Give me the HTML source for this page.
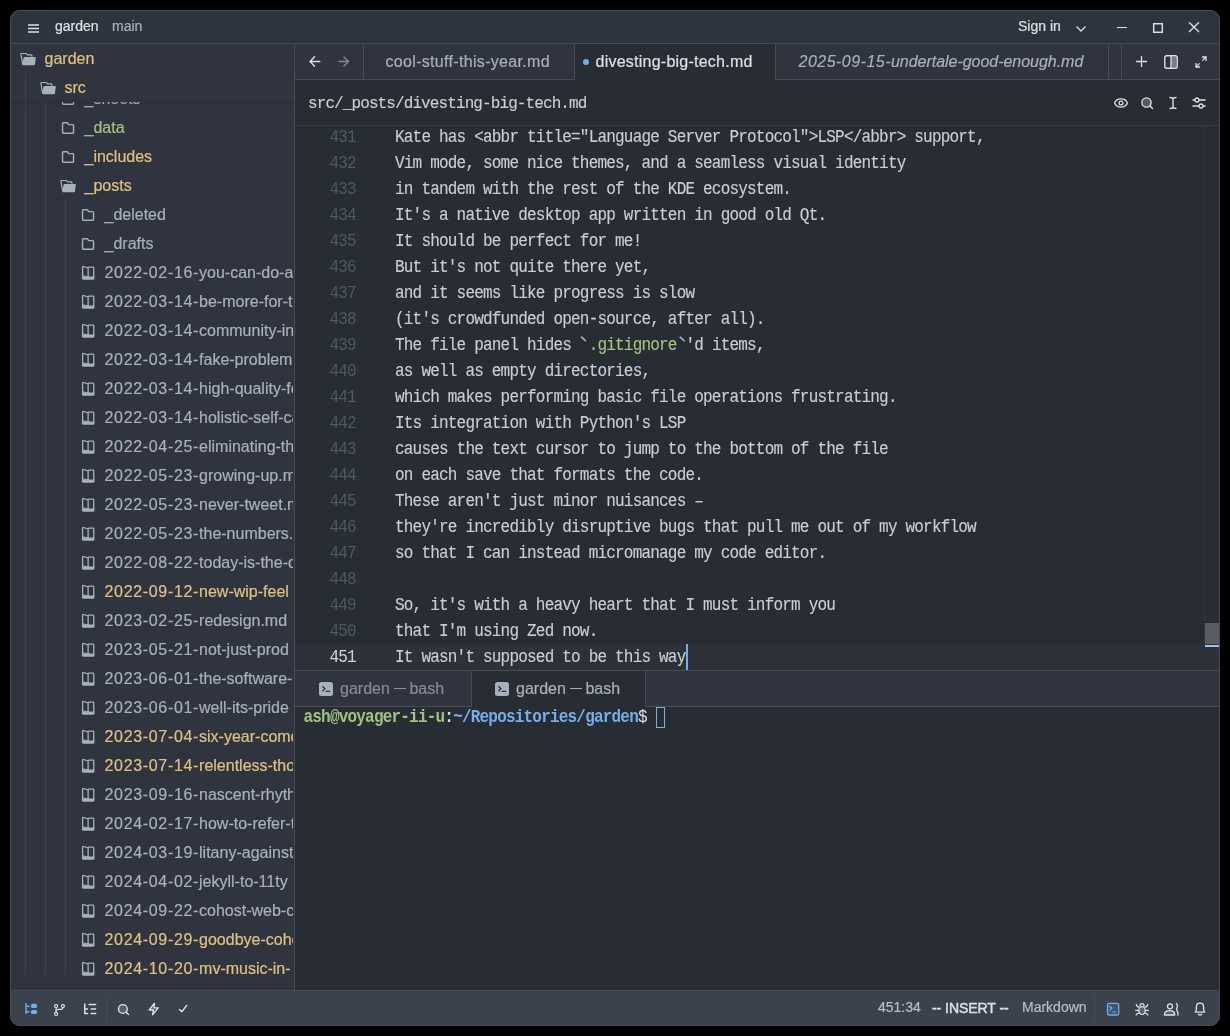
<!DOCTYPE html>
<html><head><meta charset="utf-8"><style>
*{box-sizing:border-box;margin:0;padding:0}
html,body{width:1230px;height:1036px;overflow:hidden;background:#000000}
.win{will-change:transform;position:absolute;left:10px;top:10px;width:1210px;height:1016px;border-radius:10px;overflow:hidden;background:#2f343e}
.in{position:absolute;left:-10px;top:-10px;width:1230px;height:1036px}
.ab{position:absolute}
.sans{font-family:"Liberation Sans",sans-serif;-webkit-text-stroke:0.2px currentColor}
.mono{font-family:"Liberation Mono",monospace;-webkit-text-stroke:0.15px currentColor}
.wb{position:absolute;left:10px;top:10px;width:1210px;height:1016px;border-radius:10px;border:1px solid #464b57;pointer-events:none}
.t{position:absolute;white-space:pre}
.ed{font-size:16px;letter-spacing:-0.8px;transform:scaleY(1.09);transform-origin:0 17px}
svg{position:absolute;overflow:visible}
</style></head>
<body><div class="win"><div class="in">
<div class="ab" style="left:10px;top:10px;width:1210px;height:33px;background:#2e343e;"></div>
<div class="ab" style="left:10px;top:43px;width:1210px;height:1px;background:#464b57;"></div>
<div class="ab" style="left:10px;top:44px;width:284px;height:946px;background:#2f343e;"></div>
<div class="ab" style="left:294px;top:44px;width:1px;height:946px;background:#464b57;"></div>
<div class="ab" style="left:295px;top:44px;width:925px;height:35px;background:#2f343e;"></div>
<div class="ab" style="left:295px;top:79px;width:925px;height:1px;background:#464b57;"></div>
<div class="ab" style="left:295px;top:80px;width:925px;height:45px;background:#282c33;"></div>
<div class="ab" style="left:295px;top:125px;width:925px;height:1px;background:#363c46;"></div>
<div class="ab" style="left:295px;top:126px;width:925px;height:544px;background:#282c33;"></div>
<div class="ab" style="left:295px;top:670px;width:925px;height:1px;background:#464b57;"></div>
<div class="ab" style="left:295px;top:671px;width:925px;height:35px;background:#2f343e;"></div>
<div class="ab" style="left:295px;top:706px;width:925px;height:1px;background:#464b57;"></div>
<div class="ab" style="left:295px;top:707px;width:925px;height:283px;background:#282c33;"></div>
<div class="ab" style="left:10px;top:990px;width:1210px;height:1px;background:#464b57;"></div>
<div class="ab" style="left:10px;top:991px;width:1210px;height:35px;background:#3b414d;"></div>
<svg style="left:27px;top:20px;" width="14" height="14" viewBox="0 0 14 14"><g stroke="#dce0e5" stroke-width="1.3"><line x1="1" y1="5" x2="12" y2="5"/><line x1="1" y1="8.5" x2="12" y2="8.5"/><line x1="1" y1="12" x2="12" y2="12"/></g></svg>
<div class="t sans" style="left:55px;top:16.00px;font-size:14px;line-height:20px;color:#dce0e5;">garden</div>
<div class="t sans" style="left:112px;top:16.00px;font-size:14px;line-height:20px;color:#a9afbc;">main</div>
<div class="t sans" style="left:1018px;top:16.00px;font-size:14px;line-height:20px;color:#dce0e5;">Sign in</div>
<svg style="left:1074px;top:22px;" width="14" height="12" viewBox="0 0 14 12"><polyline points="2.5,4.5 7,9 11.5,4.5" fill="none" stroke="#dce0e5" stroke-width="1.3"/></svg>
<div class="ab" style="left:1117px;top:26.5px;width:10px;height:1.4px;background:#dce0e5;"></div>
<svg style="left:1150px;top:20px;" width="16" height="16" viewBox="0 0 16 16"><rect x="3.7" y="3.7" width="8.6" height="8.6" fill="none" stroke="#dce0e5" stroke-width="1.5"/></svg>
<svg style="left:1186px;top:19px;" width="16" height="16" viewBox="0 0 16 16"><g stroke="#dce0e5" stroke-width="1.3"><line x1="3" y1="3.2" x2="13" y2="13"/><line x1="13" y1="3.2" x2="3" y2="13"/></g></svg>
<svg style="left:307px;top:54px;" width="16" height="16" viewBox="0 0 16 16"><g fill="none" stroke="#dce0e5" stroke-width="1.45" stroke-linecap="round" stroke-linejoin="round"><line x1="3.2" y1="7.5" x2="12.8" y2="7.5"/><polyline points="7.5,2.8 3.2,7.5 7.5,12.2"/></g></svg>
<svg style="left:336px;top:54px;" width="16" height="16" viewBox="0 0 16 16"><g fill="none" stroke="#878a98" stroke-width="1.4" stroke-linecap="round" stroke-linejoin="round"><line x1="3" y1="7.5" x2="12.4" y2="7.5"/><polyline points="8,3 12.4,7.5 8,12"/></g></svg>
<div class="ab" style="left:363px;top:44px;width:1px;height:35px;background:#464b57;"></div>
<div class="t sans" style="left:385.5px;top:51.00px;font-size:16px;line-height:22px;color:#a9afbc;letter-spacing:0.32px">cool-stuff-this-year.md</div>
<div class="ab" style="left:574px;top:44px;width:1px;height:35px;background:#464b57;"></div>
<div class="ab" style="left:575px;top:44px;width:200px;height:36px;background:#282c33;"></div>
<div class="ab" style="left:775px;top:44px;width:1px;height:35px;background:#464b57;"></div>
<div class="ab" style="left:583px;top:58.5px;width:6px;height:6px;border-radius:50%;background:#74ade8"></div>
<div class="t sans" style="left:595.5px;top:51.00px;font-size:16px;line-height:22px;color:#dce0e5;letter-spacing:0.24px">divesting-big-tech.md</div>
<div class="t sans" style="left:798.5px;top:51.00px;font-size:16px;line-height:22px;color:#a9afbc;font-style:italic;letter-spacing:-0.03px"><span style="letter-spacing:0.48px">2025-09-15-</span>undertale-good-enough.md</div>
<div class="ab" style="left:1108px;top:44px;width:1px;height:35px;background:#464b57;"></div>
<div class="ab" style="left:1121px;top:44px;width:1px;height:35px;background:#464b57;"></div>
<svg style="left:1134px;top:54px;" width="16" height="16" viewBox="0 0 16 16"><g stroke="#dce0e5" stroke-width="1.3"><line x1="7.5" y1="2" x2="7.5" y2="13"/><line x1="2" y1="7.5" x2="13" y2="7.5"/></g></svg>
<svg style="left:1163px;top:54px;" width="16" height="16" viewBox="0 0 16 16"><rect x="1.8" y="1.8" width="12.4" height="12.4" rx="2" fill="none" stroke="#dce0e5" stroke-width="1.4"/><rect x="8" y="2.5" width="5.5" height="11" fill="#a9afbc" opacity="0.6"/><line x1="8" y1="2" x2="8" y2="14" stroke="#dce0e5" stroke-width="1.3"/></svg>
<svg style="left:1193px;top:54px;" width="16" height="16" viewBox="0 0 16 16"><g fill="none" stroke="#dce0e5" stroke-width="1.3"><line x1="3" y1="13" x2="6.6" y2="9.4"/><line x1="9.4" y1="6.6" x2="13" y2="3"/><polyline points="9,3 13,3 13,7"/><polyline points="3,9 3,13 7,13"/></g></svg>
<div class="t mono" style="left:308px;top:93.00px;font-size:16px;line-height:22px;color:#c8ccd4;letter-spacing:-0.9px">src/_posts/divesting-big-tech.md</div>
<svg style="left:1113px;top:95px;" width="16" height="16" viewBox="0 0 16 16"><g fill="none" stroke="#dce0e5" stroke-width="1.3"><path d="M1.6 8 C3.6 2.6 12.4 2.6 14.4 8 C12.4 13.4 3.6 13.4 1.6 8Z"/><circle cx="8" cy="8" r="1.9"/></g></svg>
<svg style="left:1139px;top:95px;" width="16" height="16" viewBox="0 0 16 16"><circle cx="7.5" cy="7.5" r="4.6" fill="#555a63" stroke="#dce0e5" stroke-width="1.4"/><line x1="10.8" y1="10.8" x2="13.5" y2="13.5" stroke="#dce0e5" stroke-width="1.4" stroke-linecap="round"/></svg>
<svg style="left:1165px;top:95px;" width="16" height="16" viewBox="0 0 16 16"><g fill="none" stroke="#dce0e5" stroke-width="1.4"><line x1="8" y1="3" x2="8" y2="13"/><path d="M4.5 2.5 Q8 2.5 8 4 Q8 2.5 11.5 2.5"/><path d="M4.5 13.5 Q8 13.5 8 12 Q8 13.5 11.5 13.5"/></g></svg>
<svg style="left:1191px;top:95px;" width="16" height="16" viewBox="0 0 16 16"><g fill="none" stroke="#dce0e5" stroke-width="1.3"><line x1="1.5" y1="5" x2="14.5" y2="5"/><line x1="1.5" y1="11" x2="14.5" y2="11"/></g><circle cx="6" cy="5" r="2" fill="#282c33" stroke="#dce0e5" stroke-width="1.3"/><circle cx="10" cy="11" r="2" fill="#282c33" stroke="#dce0e5" stroke-width="1.3"/></svg>
<div class="ab" style="left:295px;top:644px;width:924px;height:26px;background:#2d313a;"></div>
<div class="t mono ed" style="left:300px;width:55.8px;text-align:right;top:125px;height:26px;line-height:26px;color:#4e5a5f;-webkit-text-stroke:0">431</div>
<div class="t mono ed" style="left:395px;top:125px;height:26px;line-height:26px;color:#c8ccd4">Kate has &lt;abbr title="Language Server Protocol"&gt;LSP&lt;/abbr&gt; support,</div>
<div class="t mono ed" style="left:300px;width:55.8px;text-align:right;top:151px;height:26px;line-height:26px;color:#4e5a5f;-webkit-text-stroke:0">432</div>
<div class="t mono ed" style="left:395px;top:151px;height:26px;line-height:26px;color:#c8ccd4">Vim mode, some nice themes, and a seamless visual identity</div>
<div class="t mono ed" style="left:300px;width:55.8px;text-align:right;top:177px;height:26px;line-height:26px;color:#4e5a5f;-webkit-text-stroke:0">433</div>
<div class="t mono ed" style="left:395px;top:177px;height:26px;line-height:26px;color:#c8ccd4">in tandem with the rest of the KDE ecosystem.</div>
<div class="t mono ed" style="left:300px;width:55.8px;text-align:right;top:203px;height:26px;line-height:26px;color:#4e5a5f;-webkit-text-stroke:0">434</div>
<div class="t mono ed" style="left:395px;top:203px;height:26px;line-height:26px;color:#c8ccd4">It's a native desktop app written in good old Qt.</div>
<div class="t mono ed" style="left:300px;width:55.8px;text-align:right;top:229px;height:26px;line-height:26px;color:#4e5a5f;-webkit-text-stroke:0">435</div>
<div class="t mono ed" style="left:395px;top:229px;height:26px;line-height:26px;color:#c8ccd4">It should be perfect for me!</div>
<div class="t mono ed" style="left:300px;width:55.8px;text-align:right;top:255px;height:26px;line-height:26px;color:#4e5a5f;-webkit-text-stroke:0">436</div>
<div class="t mono ed" style="left:395px;top:255px;height:26px;line-height:26px;color:#c8ccd4">But it's not quite there yet,</div>
<div class="t mono ed" style="left:300px;width:55.8px;text-align:right;top:281px;height:26px;line-height:26px;color:#4e5a5f;-webkit-text-stroke:0">437</div>
<div class="t mono ed" style="left:395px;top:281px;height:26px;line-height:26px;color:#c8ccd4">and it seems like progress is slow</div>
<div class="t mono ed" style="left:300px;width:55.8px;text-align:right;top:307px;height:26px;line-height:26px;color:#4e5a5f;-webkit-text-stroke:0">438</div>
<div class="t mono ed" style="left:395px;top:307px;height:26px;line-height:26px;color:#c8ccd4">(it's crowdfunded open-source, after all).</div>
<div class="t mono ed" style="left:300px;width:55.8px;text-align:right;top:333px;height:26px;line-height:26px;color:#4e5a5f;-webkit-text-stroke:0">439</div>
<div class="t mono ed" style="left:395px;top:333px;height:26px;line-height:26px;color:#c8ccd4">The file panel hides  <span style='color:#a1c181'>.gitignore</span> 'd items,</div>
<div class="t mono ed" style="left:300px;width:55.8px;text-align:right;top:359px;height:26px;line-height:26px;color:#4e5a5f;-webkit-text-stroke:0">440</div>
<div class="t mono ed" style="left:395px;top:359px;height:26px;line-height:26px;color:#c8ccd4">as well as empty directories,</div>
<div class="t mono ed" style="left:300px;width:55.8px;text-align:right;top:385px;height:26px;line-height:26px;color:#4e5a5f;-webkit-text-stroke:0">441</div>
<div class="t mono ed" style="left:395px;top:385px;height:26px;line-height:26px;color:#c8ccd4">which makes performing basic file operations frustrating.</div>
<div class="t mono ed" style="left:300px;width:55.8px;text-align:right;top:411px;height:26px;line-height:26px;color:#4e5a5f;-webkit-text-stroke:0">442</div>
<div class="t mono ed" style="left:395px;top:411px;height:26px;line-height:26px;color:#c8ccd4">Its integration with Python's LSP</div>
<div class="t mono ed" style="left:300px;width:55.8px;text-align:right;top:437px;height:26px;line-height:26px;color:#4e5a5f;-webkit-text-stroke:0">443</div>
<div class="t mono ed" style="left:395px;top:437px;height:26px;line-height:26px;color:#c8ccd4">causes the text cursor to jump to the bottom of the file</div>
<div class="t mono ed" style="left:300px;width:55.8px;text-align:right;top:463px;height:26px;line-height:26px;color:#4e5a5f;-webkit-text-stroke:0">444</div>
<div class="t mono ed" style="left:395px;top:463px;height:26px;line-height:26px;color:#c8ccd4">on each save that formats the code.</div>
<div class="t mono ed" style="left:300px;width:55.8px;text-align:right;top:489px;height:26px;line-height:26px;color:#4e5a5f;-webkit-text-stroke:0">445</div>
<div class="t mono ed" style="left:395px;top:489px;height:26px;line-height:26px;color:#c8ccd4">These aren't just minor nuisances –</div>
<div class="t mono ed" style="left:300px;width:55.8px;text-align:right;top:515px;height:26px;line-height:26px;color:#4e5a5f;-webkit-text-stroke:0">446</div>
<div class="t mono ed" style="left:395px;top:515px;height:26px;line-height:26px;color:#c8ccd4">they're incredibly disruptive bugs that pull me out of my workflow</div>
<div class="t mono ed" style="left:300px;width:55.8px;text-align:right;top:541px;height:26px;line-height:26px;color:#4e5a5f;-webkit-text-stroke:0">447</div>
<div class="t mono ed" style="left:395px;top:541px;height:26px;line-height:26px;color:#c8ccd4">so that I can instead micromanage my code editor.</div>
<div class="t mono ed" style="left:300px;width:55.8px;text-align:right;top:567px;height:26px;line-height:26px;color:#4e5a5f;-webkit-text-stroke:0">448</div>
<div class="t mono ed" style="left:300px;width:55.8px;text-align:right;top:593px;height:26px;line-height:26px;color:#4e5a5f;-webkit-text-stroke:0">449</div>
<div class="t mono ed" style="left:395px;top:593px;height:26px;line-height:26px;color:#c8ccd4">So, it's with a heavy heart that I must inform you</div>
<div class="t mono ed" style="left:300px;width:55.8px;text-align:right;top:619px;height:26px;line-height:26px;color:#4e5a5f;-webkit-text-stroke:0">450</div>
<div class="t mono ed" style="left:395px;top:619px;height:26px;line-height:26px;color:#c8ccd4">that I'm using Zed now.</div>
<div class="t mono ed" style="left:300px;width:55.8px;text-align:right;top:645px;height:26px;line-height:26px;color:#d0d4da;-webkit-text-stroke:0">451</div>
<div class="t mono ed" style="left:395px;top:645px;height:26px;line-height:26px;color:#c8ccd4">It wasn't supposed to be this way</div>
<svg style="left:579px;top:334px;" width="10" height="10" viewBox="0 0 10 10"><line x1="2.6" y1="3.2" x2="6.4" y2="6.6" stroke="#b5b4a6" stroke-width="1.6" stroke-linecap="round"/></svg>
<svg style="left:676px;top:334px;" width="10" height="10" viewBox="0 0 10 10"><line x1="4.2" y1="3.2" x2="8" y2="6.6" stroke="#acb2be" stroke-width="1.6" stroke-linecap="round"/></svg>
<div class="ab" style="left:686px;top:644px;width:2px;height:26px;background:#74ade8;"></div>
<div class="ab" style="left:1204px;top:126px;width:1px;height:518px;background:#2e333c;"></div>
<div class="ab" style="left:1205px;top:623px;width:14px;height:21px;background:#585c63;"></div>
<div class="ab" style="left:1205px;top:645px;width:14px;height:2px;background:#a0c4f0;"></div>
<div class="ab" style="left:471px;top:671px;width:1px;height:35px;background:#464b57;"></div>
<div class="ab" style="left:472px;top:671px;width:173px;height:36px;background:#282c33;"></div>
<div class="ab" style="left:645px;top:671px;width:1px;height:35px;background:#464b57;"></div>
<svg style="left:319px;top:682px;" width="14" height="14" viewBox="0 0 14 14"><rect x="0" y="0" width="14" height="14" rx="2.5" fill="#a9afbc"/><polyline points="3.4,4.3 5.9,6.8 3.4,9.3" fill="none" stroke="#2f343e" stroke-width="1.3"/><line x1="7.2" y1="9.4" x2="10.6" y2="9.4" stroke="#2f343e" stroke-width="1.2" stroke-linecap="round"/></svg>
<div class="t sans" style="left:340px;top:678.00px;font-size:16px;line-height:22px;color:#878a98;">garden<span style="display:inline-block;width:11.8px;height:1.3px;background:currentColor;vertical-align:5px;margin:0 3.6px 0 4.2px"></span>bash</div>
<svg style="left:495px;top:682px;" width="14" height="14" viewBox="0 0 14 14"><rect x="0" y="0" width="14" height="14" rx="2.5" fill="#a9afbc"/><polyline points="3.4,4.3 5.9,6.8 3.4,9.3" fill="none" stroke="#282c33" stroke-width="1.3"/><line x1="7.2" y1="9.4" x2="10.6" y2="9.4" stroke="#282c33" stroke-width="1.2" stroke-linecap="round"/></svg>
<div class="t sans" style="left:516px;top:678.00px;font-size:16px;line-height:22px;color:#a9afbc;">garden<span style="display:inline-block;width:11.8px;height:1.3px;background:currentColor;vertical-align:5px;margin:0 3.6px 0 4.2px"></span>bash</div>
<div class="t mono ed" style="left:303.5px;top:708px;height:20px;line-height:20px;transform-origin:0 14px;-webkit-text-stroke:0"><b style='color:#a1c181'>ash@voyager-ii-u</b><b style='color:#dce0e5'>:</b><b style='color:#74ade8'>~/Repositories/garden</b><span style='color:#dce0e5'>$ </span></div>
<div class="ab" style="left:656px;top:707px;width:9px;height:21px;background:transparent;border:1px solid #74ade8"></div>
<svg style="left:22px;top:1000px;" width="16" height="16" viewBox="0 0 16 16"><g fill="none" stroke="#74ade8" stroke-width="1.4"><line x1="4" y1="3" x2="4" y2="14"/><line x1="4" y1="6.2" x2="7.5" y2="6.2"/><line x1="4" y1="11.8" x2="7.5" y2="11.8"/></g><rect x="9" y="3.8" width="6" height="4.2" rx="1.6" fill="#74ade8"/><rect x="9" y="9.9" width="6" height="4.2" rx="1.6" fill="#74ade8"/></svg>
<svg style="left:51px;top:1000px;" width="16" height="16" viewBox="0 0 16 16"><g fill="none" stroke="#dce0e5" stroke-width="1.15"><circle cx="5.1" cy="6.1" r="1.55"/><circle cx="11.9" cy="6.1" r="1.55"/><circle cx="5.1" cy="13.9" r="1.55"/><line x1="5.1" y1="7.7" x2="5.1" y2="12.3"/><path d="M11.9 7.7 Q11.9 9.4 10 9.4 L7.2 9.4 Q5.1 9.4 5.1 11.2"/></g></svg>
<svg style="left:82px;top:1000px;" width="16" height="16" viewBox="0 0 16 16"><g fill="none" stroke="#dce0e5" stroke-width="1.5"><path d="M2.8 3.6 L2.8 13.6 L6.2 13.6"/><line x1="2.8" y1="9" x2="6" y2="9"/><line x1="6.6" y1="4.6" x2="14.2" y2="4.6"/><line x1="8.6" y1="9" x2="14.2" y2="9"/><line x1="8.6" y1="13.4" x2="14.2" y2="13.4"/></g></svg>
<div class="ab" style="left:106px;top:996px;width:1px;height:25px;background:#464b57;"></div>
<svg style="left:115px;top:1001px;" width="16" height="16" viewBox="0 0 16 16"><circle cx="7.9" cy="8" r="4.4" fill="#5a606b" stroke="#dce0e5" stroke-width="1.4"/><line x1="11.2" y1="11.3" x2="13.5" y2="13.6" stroke="#dce0e5" stroke-width="1.4" stroke-linecap="round"/></svg>
<svg style="left:146px;top:1001px;" width="16" height="16" viewBox="0 0 16 16"><path d="M8.5 2.2 L3.2 9 L7.5 9 L6.5 13.8 L12.3 6.8 L8 6.8 Z" fill="#5a606b" stroke="#dce0e5" stroke-width="1.3" stroke-linejoin="round"/></svg>
<svg style="left:175px;top:1001px;" width="16" height="16" viewBox="0 0 16 16"><polyline points="4.5,8.5 6.8,10.8 11.7,4.5" fill="none" stroke="#dce0e5" stroke-width="1.4" stroke-linecap="round" stroke-linejoin="round"/></svg>
<div class="t sans" style="left:878px;top:997.00px;font-size:14px;line-height:20px;color:#b8bdc7;">451:34</div>
<div class="t sans" style="left:932px;top:998.00px;font-size:14px;line-height:20px;color:#dce0e5;letter-spacing:-0.05px;-webkit-text-stroke:0.45px currentColor">-- INSERT --</div>
<div class="t sans" style="left:1022px;top:997.00px;font-size:14px;line-height:20px;color:#b8bdc7;">Markdown</div>
<div class="ab" style="left:1094px;top:996px;width:1px;height:25px;background:#464b57;"></div>
<svg style="left:1105px;top:1001px;" width="16" height="16" viewBox="0 0 16 16"><rect x="2.5" y="2.4" width="11.2" height="11.6" rx="1.5" fill="#3e5672" stroke="#74ade8" stroke-width="1.3"/><polyline points="4.5,5 6.8,7.3 4.5,9.6" fill="none" stroke="#74ade8" stroke-width="1.2"/><line x1="7.5" y1="11" x2="11" y2="11" stroke="#74ade8" stroke-width="1.2"/></svg>
<svg style="left:1134px;top:1001px;" width="16" height="16" viewBox="0 0 16 16"><g fill="none" stroke="#dce0e5" stroke-width="1.2" stroke-linecap="round"><path d="M5.9 5.2 Q5.9 2.6 8 2.6 Q10.1 2.6 10.1 5.2"/><ellipse cx="8" cy="9.6" rx="3.2" ry="3.9" fill="#5a606b"/><path d="M2.3 3.4 Q2.4 5.6 4.9 6.2"/><path d="M13.7 3.4 Q13.6 5.6 11.1 6.2"/><line x1="1.6" y1="9.3" x2="4.7" y2="9.3"/><line x1="11.3" y1="9.3" x2="14.4" y2="9.3"/><path d="M4.9 12.1 Q2.6 12.5 2.1 14.2"/><path d="M11.1 12.1 Q13.4 12.5 13.9 14.2"/></g></svg>
<svg style="left:1163px;top:1001px;" width="17" height="16" viewBox="0 0 17 16"><g fill="none" stroke="#dce0e5" stroke-width="1.3"><circle cx="7" cy="5.3" r="2.5"/><path d="M1.4 14 Q1.4 9.6 6.6 9.6 Q11.8 9.6 11.8 14 Z" fill="#5a606b" stroke-linejoin="round"/><path d="M13.4 2.4 Q15.2 4.4 13.9 6.9 Q13.1 8.2 14.1 9.8 Q15.4 11.8 14.9 14.2" stroke-linecap="round"/></g></svg>
<svg style="left:1192px;top:1001px;" width="16" height="16" viewBox="0 0 16 16"><g fill="none" stroke="#dce0e5" stroke-width="1.3" stroke-linejoin="round"><path d="M3.2 11.2 Q4.4 10.2 4.4 8.2 L4.4 6 Q4.4 2.2 8 2.2 Q11.6 2.2 11.6 6 L11.6 8.2 Q11.6 10.2 12.8 11.2 Z"/><path d="M6.4 13.2 Q8 14.8 9.6 13.2" stroke-linecap="round"/></g></svg>
<div class="ab" style="left:10px;top:44px;width:283px;height:946px;overflow:hidden"><div class="ab" style="left:15px;top:29px;width:1px;height:901px;background:#3d424c"></div><div class="ab" style="left:35px;top:58px;width:1px;height:872px;background:#3d424c"></div><div class="ab" style="left:55px;top:156px;width:1px;height:774px;background:#3d424c"></div><svg style="left:50px;top:47px" width="16" height="16" viewBox="0 0 16 16"><path d="M2.55 3.6 Q2.55 2.8 3.4 2.8 L7.5 2.8 L8.7 4.6 L12.7 4.6 Q13.55 4.6 13.55 5.5 L13.55 12.3 Q13.55 13.2 12.7 13.2 L3.4 13.2 Q2.55 13.2 2.55 12.3 Z" fill="none" stroke="#a9afbc" stroke-width="1.4" stroke-linejoin="round"/></svg><div class="t sans" style="left:74.5px;top:44.00px;font-size:16px;line-height:22px;color:#a9afbc">_sheets</div><svg style="left:50px;top:76px" width="16" height="16" viewBox="0 0 16 16"><path d="M2.55 3.6 Q2.55 2.8 3.4 2.8 L7.5 2.8 L8.7 4.6 L12.7 4.6 Q13.55 4.6 13.55 5.5 L13.55 12.3 Q13.55 13.2 12.7 13.2 L3.4 13.2 Q2.55 13.2 2.55 12.3 Z" fill="none" stroke="#a9afbc" stroke-width="1.4" stroke-linejoin="round"/></svg><div class="t sans" style="left:74.5px;top:73.00px;font-size:16px;line-height:22px;color:#a7c088">_data</div><svg style="left:50px;top:105px" width="16" height="16" viewBox="0 0 16 16"><path d="M2.55 3.6 Q2.55 2.8 3.4 2.8 L7.5 2.8 L8.7 4.6 L12.7 4.6 Q13.55 4.6 13.55 5.5 L13.55 12.3 Q13.55 13.2 12.7 13.2 L3.4 13.2 Q2.55 13.2 2.55 12.3 Z" fill="none" stroke="#a9afbc" stroke-width="1.4" stroke-linejoin="round"/></svg><div class="t sans" style="left:74.5px;top:102.00px;font-size:16px;line-height:22px;color:#dec184">_includes</div><svg style="left:50px;top:134px" width="16" height="16" viewBox="0 0 16 16"><path d="M2.6 13 L0.9 3.3 Q0.8 2.5 1.7 2.5 L6.4 2.5 L7.4 3.8 L11 3.8 Q11.8 3.8 11.9 4.6 L12 5.8" fill="none" stroke="#a9afbc" stroke-width="1.2" stroke-linejoin="round"/><path d="M4.2 6.1 L15.2 6.1 Q15.9 6.1 15.8 6.8 L15 13.3 Q14.9 14.2 14 14.2 L2.9 14.2 Q2.1 14.2 2.3 13.4 L3.5 6.8 Q3.6 6.1 4.2 6.1 Z" fill="#a9afbc"/></svg><div class="t sans" style="left:74.5px;top:131.00px;font-size:16px;line-height:22px;color:#dec184">_posts</div><svg style="left:70px;top:163px" width="16" height="16" viewBox="0 0 16 16"><path d="M2.55 3.6 Q2.55 2.8 3.4 2.8 L7.5 2.8 L8.7 4.6 L12.7 4.6 Q13.55 4.6 13.55 5.5 L13.55 12.3 Q13.55 13.2 12.7 13.2 L3.4 13.2 Q2.55 13.2 2.55 12.3 Z" fill="none" stroke="#a9afbc" stroke-width="1.4" stroke-linejoin="round"/></svg><div class="t sans" style="left:94.5px;top:160.00px;font-size:16px;line-height:22px;color:#a9afbc">_deleted</div><svg style="left:70px;top:192px" width="16" height="16" viewBox="0 0 16 16"><path d="M2.55 3.6 Q2.55 2.8 3.4 2.8 L7.5 2.8 L8.7 4.6 L12.7 4.6 Q13.55 4.6 13.55 5.5 L13.55 12.3 Q13.55 13.2 12.7 13.2 L3.4 13.2 Q2.55 13.2 2.55 12.3 Z" fill="none" stroke="#a9afbc" stroke-width="1.4" stroke-linejoin="round"/></svg><div class="t sans" style="left:94.5px;top:189.00px;font-size:16px;line-height:22px;color:#a9afbc">_drafts</div><svg style="left:70px;top:221px" width="16" height="16" viewBox="0 0 16 16"><path d="M2.6 13.5 L2.6 2.2 Q2.6 1.3 3.5 1.5 L8.1 2.9 L8.1 12.4" fill="none" stroke="#a9afbc" stroke-width="1.3" stroke-linejoin="round"/><path d="M3.2 10.8 L8.1 12.2" fill="none" stroke="#a9afbc" stroke-width="1.1"/><path d="M8.1 2.9 Q8.2 2.2 9.1 2.2 L13.1 2.2 Q13.75 2.2 13.75 2.9 L13.75 12.5" fill="none" stroke="#a9afbc" stroke-width="1.3" stroke-linejoin="round"/><path d="M1.95 11.6 L14.4 11.6 L14.4 13.4 Q14.4 14.8 13 14.8 L3.5 14.8 Q1.95 14.8 1.95 13.2 Z" fill="#a9afbc"/><rect x="7.5" y="11" width="1.3" height="1.5" fill="#a9afbc"/></svg><div class="t sans" style="left:94.5px;top:218.00px;font-size:16px;line-height:22px;color:#a9afbc"><span style="letter-spacing:0.67px">2022-02-16-</span>you-can-do-anything.md</div><svg style="left:70px;top:250px" width="16" height="16" viewBox="0 0 16 16"><path d="M2.6 13.5 L2.6 2.2 Q2.6 1.3 3.5 1.5 L8.1 2.9 L8.1 12.4" fill="none" stroke="#a9afbc" stroke-width="1.3" stroke-linejoin="round"/><path d="M3.2 10.8 L8.1 12.2" fill="none" stroke="#a9afbc" stroke-width="1.1"/><path d="M8.1 2.9 Q8.2 2.2 9.1 2.2 L13.1 2.2 Q13.75 2.2 13.75 2.9 L13.75 12.5" fill="none" stroke="#a9afbc" stroke-width="1.3" stroke-linejoin="round"/><path d="M1.95 11.6 L14.4 11.6 L14.4 13.4 Q14.4 14.8 13 14.8 L3.5 14.8 Q1.95 14.8 1.95 13.2 Z" fill="#a9afbc"/><rect x="7.5" y="11" width="1.3" height="1.5" fill="#a9afbc"/></svg><div class="t sans" style="left:94.5px;top:247.00px;font-size:16px;line-height:22px;color:#a9afbc"><span style="letter-spacing:0.67px">2022-03-14-</span>be-more-for-the-world.md</div><svg style="left:70px;top:279px" width="16" height="16" viewBox="0 0 16 16"><path d="M2.6 13.5 L2.6 2.2 Q2.6 1.3 3.5 1.5 L8.1 2.9 L8.1 12.4" fill="none" stroke="#a9afbc" stroke-width="1.3" stroke-linejoin="round"/><path d="M3.2 10.8 L8.1 12.2" fill="none" stroke="#a9afbc" stroke-width="1.1"/><path d="M8.1 2.9 Q8.2 2.2 9.1 2.2 L13.1 2.2 Q13.75 2.2 13.75 2.9 L13.75 12.5" fill="none" stroke="#a9afbc" stroke-width="1.3" stroke-linejoin="round"/><path d="M1.95 11.6 L14.4 11.6 L14.4 13.4 Q14.4 14.8 13 14.8 L3.5 14.8 Q1.95 14.8 1.95 13.2 Z" fill="#a9afbc"/><rect x="7.5" y="11" width="1.3" height="1.5" fill="#a9afbc"/></svg><div class="t sans" style="left:94.5px;top:276.00px;font-size:16px;line-height:22px;color:#a9afbc"><span style="letter-spacing:0.67px">2022-03-14-</span>community-in-the-age.md</div><svg style="left:70px;top:308px" width="16" height="16" viewBox="0 0 16 16"><path d="M2.6 13.5 L2.6 2.2 Q2.6 1.3 3.5 1.5 L8.1 2.9 L8.1 12.4" fill="none" stroke="#a9afbc" stroke-width="1.3" stroke-linejoin="round"/><path d="M3.2 10.8 L8.1 12.2" fill="none" stroke="#a9afbc" stroke-width="1.1"/><path d="M8.1 2.9 Q8.2 2.2 9.1 2.2 L13.1 2.2 Q13.75 2.2 13.75 2.9 L13.75 12.5" fill="none" stroke="#a9afbc" stroke-width="1.3" stroke-linejoin="round"/><path d="M1.95 11.6 L14.4 11.6 L14.4 13.4 Q14.4 14.8 13 14.8 L3.5 14.8 Q1.95 14.8 1.95 13.2 Z" fill="#a9afbc"/><rect x="7.5" y="11" width="1.3" height="1.5" fill="#a9afbc"/></svg><div class="t sans" style="left:94.5px;top:305.00px;font-size:16px;line-height:22px;color:#a9afbc"><span style="letter-spacing:0.67px">2022-03-14-</span>fake-problems.md</div><svg style="left:70px;top:337px" width="16" height="16" viewBox="0 0 16 16"><path d="M2.6 13.5 L2.6 2.2 Q2.6 1.3 3.5 1.5 L8.1 2.9 L8.1 12.4" fill="none" stroke="#a9afbc" stroke-width="1.3" stroke-linejoin="round"/><path d="M3.2 10.8 L8.1 12.2" fill="none" stroke="#a9afbc" stroke-width="1.1"/><path d="M8.1 2.9 Q8.2 2.2 9.1 2.2 L13.1 2.2 Q13.75 2.2 13.75 2.9 L13.75 12.5" fill="none" stroke="#a9afbc" stroke-width="1.3" stroke-linejoin="round"/><path d="M1.95 11.6 L14.4 11.6 L14.4 13.4 Q14.4 14.8 13 14.8 L3.5 14.8 Q1.95 14.8 1.95 13.2 Z" fill="#a9afbc"/><rect x="7.5" y="11" width="1.3" height="1.5" fill="#a9afbc"/></svg><div class="t sans" style="left:94.5px;top:334.00px;font-size:16px;line-height:22px;color:#a9afbc"><span style="letter-spacing:0.67px">2022-03-14-</span>high-quality-feedback.md</div><svg style="left:70px;top:366px" width="16" height="16" viewBox="0 0 16 16"><path d="M2.6 13.5 L2.6 2.2 Q2.6 1.3 3.5 1.5 L8.1 2.9 L8.1 12.4" fill="none" stroke="#a9afbc" stroke-width="1.3" stroke-linejoin="round"/><path d="M3.2 10.8 L8.1 12.2" fill="none" stroke="#a9afbc" stroke-width="1.1"/><path d="M8.1 2.9 Q8.2 2.2 9.1 2.2 L13.1 2.2 Q13.75 2.2 13.75 2.9 L13.75 12.5" fill="none" stroke="#a9afbc" stroke-width="1.3" stroke-linejoin="round"/><path d="M1.95 11.6 L14.4 11.6 L14.4 13.4 Q14.4 14.8 13 14.8 L3.5 14.8 Q1.95 14.8 1.95 13.2 Z" fill="#a9afbc"/><rect x="7.5" y="11" width="1.3" height="1.5" fill="#a9afbc"/></svg><div class="t sans" style="left:94.5px;top:363.00px;font-size:16px;line-height:22px;color:#a9afbc"><span style="letter-spacing:0.67px">2022-03-14-</span>holistic-self-care.md</div><svg style="left:70px;top:395px" width="16" height="16" viewBox="0 0 16 16"><path d="M2.6 13.5 L2.6 2.2 Q2.6 1.3 3.5 1.5 L8.1 2.9 L8.1 12.4" fill="none" stroke="#a9afbc" stroke-width="1.3" stroke-linejoin="round"/><path d="M3.2 10.8 L8.1 12.2" fill="none" stroke="#a9afbc" stroke-width="1.1"/><path d="M8.1 2.9 Q8.2 2.2 9.1 2.2 L13.1 2.2 Q13.75 2.2 13.75 2.9 L13.75 12.5" fill="none" stroke="#a9afbc" stroke-width="1.3" stroke-linejoin="round"/><path d="M1.95 11.6 L14.4 11.6 L14.4 13.4 Q14.4 14.8 13 14.8 L3.5 14.8 Q1.95 14.8 1.95 13.2 Z" fill="#a9afbc"/><rect x="7.5" y="11" width="1.3" height="1.5" fill="#a9afbc"/></svg><div class="t sans" style="left:94.5px;top:392.00px;font-size:16px;line-height:22px;color:#a9afbc"><span style="letter-spacing:0.67px">2022-04-25-</span>eliminating-the.md</div><svg style="left:70px;top:424px" width="16" height="16" viewBox="0 0 16 16"><path d="M2.6 13.5 L2.6 2.2 Q2.6 1.3 3.5 1.5 L8.1 2.9 L8.1 12.4" fill="none" stroke="#a9afbc" stroke-width="1.3" stroke-linejoin="round"/><path d="M3.2 10.8 L8.1 12.2" fill="none" stroke="#a9afbc" stroke-width="1.1"/><path d="M8.1 2.9 Q8.2 2.2 9.1 2.2 L13.1 2.2 Q13.75 2.2 13.75 2.9 L13.75 12.5" fill="none" stroke="#a9afbc" stroke-width="1.3" stroke-linejoin="round"/><path d="M1.95 11.6 L14.4 11.6 L14.4 13.4 Q14.4 14.8 13 14.8 L3.5 14.8 Q1.95 14.8 1.95 13.2 Z" fill="#a9afbc"/><rect x="7.5" y="11" width="1.3" height="1.5" fill="#a9afbc"/></svg><div class="t sans" style="left:94.5px;top:421.00px;font-size:16px;line-height:22px;color:#a9afbc"><span style="letter-spacing:0.67px">2022-05-23-</span>growing-up.md</div><svg style="left:70px;top:453px" width="16" height="16" viewBox="0 0 16 16"><path d="M2.6 13.5 L2.6 2.2 Q2.6 1.3 3.5 1.5 L8.1 2.9 L8.1 12.4" fill="none" stroke="#a9afbc" stroke-width="1.3" stroke-linejoin="round"/><path d="M3.2 10.8 L8.1 12.2" fill="none" stroke="#a9afbc" stroke-width="1.1"/><path d="M8.1 2.9 Q8.2 2.2 9.1 2.2 L13.1 2.2 Q13.75 2.2 13.75 2.9 L13.75 12.5" fill="none" stroke="#a9afbc" stroke-width="1.3" stroke-linejoin="round"/><path d="M1.95 11.6 L14.4 11.6 L14.4 13.4 Q14.4 14.8 13 14.8 L3.5 14.8 Q1.95 14.8 1.95 13.2 Z" fill="#a9afbc"/><rect x="7.5" y="11" width="1.3" height="1.5" fill="#a9afbc"/></svg><div class="t sans" style="left:94.5px;top:450.00px;font-size:16px;line-height:22px;color:#a9afbc"><span style="letter-spacing:0.67px">2022-05-23-</span>never-tweet.md</div><svg style="left:70px;top:482px" width="16" height="16" viewBox="0 0 16 16"><path d="M2.6 13.5 L2.6 2.2 Q2.6 1.3 3.5 1.5 L8.1 2.9 L8.1 12.4" fill="none" stroke="#a9afbc" stroke-width="1.3" stroke-linejoin="round"/><path d="M3.2 10.8 L8.1 12.2" fill="none" stroke="#a9afbc" stroke-width="1.1"/><path d="M8.1 2.9 Q8.2 2.2 9.1 2.2 L13.1 2.2 Q13.75 2.2 13.75 2.9 L13.75 12.5" fill="none" stroke="#a9afbc" stroke-width="1.3" stroke-linejoin="round"/><path d="M1.95 11.6 L14.4 11.6 L14.4 13.4 Q14.4 14.8 13 14.8 L3.5 14.8 Q1.95 14.8 1.95 13.2 Z" fill="#a9afbc"/><rect x="7.5" y="11" width="1.3" height="1.5" fill="#a9afbc"/></svg><div class="t sans" style="left:94.5px;top:479.00px;font-size:16px;line-height:22px;color:#a9afbc"><span style="letter-spacing:0.67px">2022-05-23-</span>the-numbers.md</div><svg style="left:70px;top:511px" width="16" height="16" viewBox="0 0 16 16"><path d="M2.6 13.5 L2.6 2.2 Q2.6 1.3 3.5 1.5 L8.1 2.9 L8.1 12.4" fill="none" stroke="#a9afbc" stroke-width="1.3" stroke-linejoin="round"/><path d="M3.2 10.8 L8.1 12.2" fill="none" stroke="#a9afbc" stroke-width="1.1"/><path d="M8.1 2.9 Q8.2 2.2 9.1 2.2 L13.1 2.2 Q13.75 2.2 13.75 2.9 L13.75 12.5" fill="none" stroke="#a9afbc" stroke-width="1.3" stroke-linejoin="round"/><path d="M1.95 11.6 L14.4 11.6 L14.4 13.4 Q14.4 14.8 13 14.8 L3.5 14.8 Q1.95 14.8 1.95 13.2 Z" fill="#a9afbc"/><rect x="7.5" y="11" width="1.3" height="1.5" fill="#a9afbc"/></svg><div class="t sans" style="left:94.5px;top:508.00px;font-size:16px;line-height:22px;color:#a9afbc"><span style="letter-spacing:0.67px">2022-08-22-</span>today-is-the-day.md</div><svg style="left:70px;top:540px" width="16" height="16" viewBox="0 0 16 16"><path d="M2.6 13.5 L2.6 2.2 Q2.6 1.3 3.5 1.5 L8.1 2.9 L8.1 12.4" fill="none" stroke="#a9afbc" stroke-width="1.3" stroke-linejoin="round"/><path d="M3.2 10.8 L8.1 12.2" fill="none" stroke="#a9afbc" stroke-width="1.1"/><path d="M8.1 2.9 Q8.2 2.2 9.1 2.2 L13.1 2.2 Q13.75 2.2 13.75 2.9 L13.75 12.5" fill="none" stroke="#a9afbc" stroke-width="1.3" stroke-linejoin="round"/><path d="M1.95 11.6 L14.4 11.6 L14.4 13.4 Q14.4 14.8 13 14.8 L3.5 14.8 Q1.95 14.8 1.95 13.2 Z" fill="#a9afbc"/><rect x="7.5" y="11" width="1.3" height="1.5" fill="#a9afbc"/></svg><div class="t sans" style="left:94.5px;top:537.00px;font-size:16px;line-height:22px;color:#dec184"><span style="letter-spacing:0.67px">2022-09-12-</span>new-wip-feel</div><svg style="left:70px;top:569px" width="16" height="16" viewBox="0 0 16 16"><path d="M2.6 13.5 L2.6 2.2 Q2.6 1.3 3.5 1.5 L8.1 2.9 L8.1 12.4" fill="none" stroke="#a9afbc" stroke-width="1.3" stroke-linejoin="round"/><path d="M3.2 10.8 L8.1 12.2" fill="none" stroke="#a9afbc" stroke-width="1.1"/><path d="M8.1 2.9 Q8.2 2.2 9.1 2.2 L13.1 2.2 Q13.75 2.2 13.75 2.9 L13.75 12.5" fill="none" stroke="#a9afbc" stroke-width="1.3" stroke-linejoin="round"/><path d="M1.95 11.6 L14.4 11.6 L14.4 13.4 Q14.4 14.8 13 14.8 L3.5 14.8 Q1.95 14.8 1.95 13.2 Z" fill="#a9afbc"/><rect x="7.5" y="11" width="1.3" height="1.5" fill="#a9afbc"/></svg><div class="t sans" style="left:94.5px;top:566.00px;font-size:16px;line-height:22px;color:#a9afbc"><span style="letter-spacing:0.67px">2023-02-25-</span>redesign.md</div><svg style="left:70px;top:598px" width="16" height="16" viewBox="0 0 16 16"><path d="M2.6 13.5 L2.6 2.2 Q2.6 1.3 3.5 1.5 L8.1 2.9 L8.1 12.4" fill="none" stroke="#a9afbc" stroke-width="1.3" stroke-linejoin="round"/><path d="M3.2 10.8 L8.1 12.2" fill="none" stroke="#a9afbc" stroke-width="1.1"/><path d="M8.1 2.9 Q8.2 2.2 9.1 2.2 L13.1 2.2 Q13.75 2.2 13.75 2.9 L13.75 12.5" fill="none" stroke="#a9afbc" stroke-width="1.3" stroke-linejoin="round"/><path d="M1.95 11.6 L14.4 11.6 L14.4 13.4 Q14.4 14.8 13 14.8 L3.5 14.8 Q1.95 14.8 1.95 13.2 Z" fill="#a9afbc"/><rect x="7.5" y="11" width="1.3" height="1.5" fill="#a9afbc"/></svg><div class="t sans" style="left:94.5px;top:595.00px;font-size:16px;line-height:22px;color:#a9afbc"><span style="letter-spacing:0.67px">2023-05-21-</span>not-just-prod</div><svg style="left:70px;top:627px" width="16" height="16" viewBox="0 0 16 16"><path d="M2.6 13.5 L2.6 2.2 Q2.6 1.3 3.5 1.5 L8.1 2.9 L8.1 12.4" fill="none" stroke="#a9afbc" stroke-width="1.3" stroke-linejoin="round"/><path d="M3.2 10.8 L8.1 12.2" fill="none" stroke="#a9afbc" stroke-width="1.1"/><path d="M8.1 2.9 Q8.2 2.2 9.1 2.2 L13.1 2.2 Q13.75 2.2 13.75 2.9 L13.75 12.5" fill="none" stroke="#a9afbc" stroke-width="1.3" stroke-linejoin="round"/><path d="M1.95 11.6 L14.4 11.6 L14.4 13.4 Q14.4 14.8 13 14.8 L3.5 14.8 Q1.95 14.8 1.95 13.2 Z" fill="#a9afbc"/><rect x="7.5" y="11" width="1.3" height="1.5" fill="#a9afbc"/></svg><div class="t sans" style="left:94.5px;top:624.00px;font-size:16px;line-height:22px;color:#a9afbc"><span style="letter-spacing:0.67px">2023-06-01-</span>the-software-of.md</div><svg style="left:70px;top:656px" width="16" height="16" viewBox="0 0 16 16"><path d="M2.6 13.5 L2.6 2.2 Q2.6 1.3 3.5 1.5 L8.1 2.9 L8.1 12.4" fill="none" stroke="#a9afbc" stroke-width="1.3" stroke-linejoin="round"/><path d="M3.2 10.8 L8.1 12.2" fill="none" stroke="#a9afbc" stroke-width="1.1"/><path d="M8.1 2.9 Q8.2 2.2 9.1 2.2 L13.1 2.2 Q13.75 2.2 13.75 2.9 L13.75 12.5" fill="none" stroke="#a9afbc" stroke-width="1.3" stroke-linejoin="round"/><path d="M1.95 11.6 L14.4 11.6 L14.4 13.4 Q14.4 14.8 13 14.8 L3.5 14.8 Q1.95 14.8 1.95 13.2 Z" fill="#a9afbc"/><rect x="7.5" y="11" width="1.3" height="1.5" fill="#a9afbc"/></svg><div class="t sans" style="left:94.5px;top:653.00px;font-size:16px;line-height:22px;color:#a9afbc"><span style="letter-spacing:0.67px">2023-06-01-</span>well-its-pride</div><svg style="left:70px;top:685px" width="16" height="16" viewBox="0 0 16 16"><path d="M2.6 13.5 L2.6 2.2 Q2.6 1.3 3.5 1.5 L8.1 2.9 L8.1 12.4" fill="none" stroke="#a9afbc" stroke-width="1.3" stroke-linejoin="round"/><path d="M3.2 10.8 L8.1 12.2" fill="none" stroke="#a9afbc" stroke-width="1.1"/><path d="M8.1 2.9 Q8.2 2.2 9.1 2.2 L13.1 2.2 Q13.75 2.2 13.75 2.9 L13.75 12.5" fill="none" stroke="#a9afbc" stroke-width="1.3" stroke-linejoin="round"/><path d="M1.95 11.6 L14.4 11.6 L14.4 13.4 Q14.4 14.8 13 14.8 L3.5 14.8 Q1.95 14.8 1.95 13.2 Z" fill="#a9afbc"/><rect x="7.5" y="11" width="1.3" height="1.5" fill="#a9afbc"/></svg><div class="t sans" style="left:94.5px;top:682.00px;font-size:16px;line-height:22px;color:#dec184"><span style="letter-spacing:0.67px">2023-07-04-</span>six-year-comeback.md</div><svg style="left:70px;top:714px" width="16" height="16" viewBox="0 0 16 16"><path d="M2.6 13.5 L2.6 2.2 Q2.6 1.3 3.5 1.5 L8.1 2.9 L8.1 12.4" fill="none" stroke="#a9afbc" stroke-width="1.3" stroke-linejoin="round"/><path d="M3.2 10.8 L8.1 12.2" fill="none" stroke="#a9afbc" stroke-width="1.1"/><path d="M8.1 2.9 Q8.2 2.2 9.1 2.2 L13.1 2.2 Q13.75 2.2 13.75 2.9 L13.75 12.5" fill="none" stroke="#a9afbc" stroke-width="1.3" stroke-linejoin="round"/><path d="M1.95 11.6 L14.4 11.6 L14.4 13.4 Q14.4 14.8 13 14.8 L3.5 14.8 Q1.95 14.8 1.95 13.2 Z" fill="#a9afbc"/><rect x="7.5" y="11" width="1.3" height="1.5" fill="#a9afbc"/></svg><div class="t sans" style="left:94.5px;top:711.00px;font-size:16px;line-height:22px;color:#dec184"><span style="letter-spacing:0.67px">2023-07-14-</span>relentless-thoughts.md</div><svg style="left:70px;top:743px" width="16" height="16" viewBox="0 0 16 16"><path d="M2.6 13.5 L2.6 2.2 Q2.6 1.3 3.5 1.5 L8.1 2.9 L8.1 12.4" fill="none" stroke="#a9afbc" stroke-width="1.3" stroke-linejoin="round"/><path d="M3.2 10.8 L8.1 12.2" fill="none" stroke="#a9afbc" stroke-width="1.1"/><path d="M8.1 2.9 Q8.2 2.2 9.1 2.2 L13.1 2.2 Q13.75 2.2 13.75 2.9 L13.75 12.5" fill="none" stroke="#a9afbc" stroke-width="1.3" stroke-linejoin="round"/><path d="M1.95 11.6 L14.4 11.6 L14.4 13.4 Q14.4 14.8 13 14.8 L3.5 14.8 Q1.95 14.8 1.95 13.2 Z" fill="#a9afbc"/><rect x="7.5" y="11" width="1.3" height="1.5" fill="#a9afbc"/></svg><div class="t sans" style="left:94.5px;top:740.00px;font-size:16px;line-height:22px;color:#a9afbc"><span style="letter-spacing:0.67px">2023-09-16-</span>nascent-rhythm.md</div><svg style="left:70px;top:772px" width="16" height="16" viewBox="0 0 16 16"><path d="M2.6 13.5 L2.6 2.2 Q2.6 1.3 3.5 1.5 L8.1 2.9 L8.1 12.4" fill="none" stroke="#a9afbc" stroke-width="1.3" stroke-linejoin="round"/><path d="M3.2 10.8 L8.1 12.2" fill="none" stroke="#a9afbc" stroke-width="1.1"/><path d="M8.1 2.9 Q8.2 2.2 9.1 2.2 L13.1 2.2 Q13.75 2.2 13.75 2.9 L13.75 12.5" fill="none" stroke="#a9afbc" stroke-width="1.3" stroke-linejoin="round"/><path d="M1.95 11.6 L14.4 11.6 L14.4 13.4 Q14.4 14.8 13 14.8 L3.5 14.8 Q1.95 14.8 1.95 13.2 Z" fill="#a9afbc"/><rect x="7.5" y="11" width="1.3" height="1.5" fill="#a9afbc"/></svg><div class="t sans" style="left:94.5px;top:769.00px;font-size:16px;line-height:22px;color:#a9afbc"><span style="letter-spacing:0.67px">2024-02-17-</span>how-to-refer-to.md</div><svg style="left:70px;top:801px" width="16" height="16" viewBox="0 0 16 16"><path d="M2.6 13.5 L2.6 2.2 Q2.6 1.3 3.5 1.5 L8.1 2.9 L8.1 12.4" fill="none" stroke="#a9afbc" stroke-width="1.3" stroke-linejoin="round"/><path d="M3.2 10.8 L8.1 12.2" fill="none" stroke="#a9afbc" stroke-width="1.1"/><path d="M8.1 2.9 Q8.2 2.2 9.1 2.2 L13.1 2.2 Q13.75 2.2 13.75 2.9 L13.75 12.5" fill="none" stroke="#a9afbc" stroke-width="1.3" stroke-linejoin="round"/><path d="M1.95 11.6 L14.4 11.6 L14.4 13.4 Q14.4 14.8 13 14.8 L3.5 14.8 Q1.95 14.8 1.95 13.2 Z" fill="#a9afbc"/><rect x="7.5" y="11" width="1.3" height="1.5" fill="#a9afbc"/></svg><div class="t sans" style="left:94.5px;top:798.00px;font-size:16px;line-height:22px;color:#a9afbc"><span style="letter-spacing:0.67px">2024-03-19-</span>litany-against-fear.md</div><svg style="left:70px;top:830px" width="16" height="16" viewBox="0 0 16 16"><path d="M2.6 13.5 L2.6 2.2 Q2.6 1.3 3.5 1.5 L8.1 2.9 L8.1 12.4" fill="none" stroke="#a9afbc" stroke-width="1.3" stroke-linejoin="round"/><path d="M3.2 10.8 L8.1 12.2" fill="none" stroke="#a9afbc" stroke-width="1.1"/><path d="M8.1 2.9 Q8.2 2.2 9.1 2.2 L13.1 2.2 Q13.75 2.2 13.75 2.9 L13.75 12.5" fill="none" stroke="#a9afbc" stroke-width="1.3" stroke-linejoin="round"/><path d="M1.95 11.6 L14.4 11.6 L14.4 13.4 Q14.4 14.8 13 14.8 L3.5 14.8 Q1.95 14.8 1.95 13.2 Z" fill="#a9afbc"/><rect x="7.5" y="11" width="1.3" height="1.5" fill="#a9afbc"/></svg><div class="t sans" style="left:94.5px;top:827.00px;font-size:16px;line-height:22px;color:#a9afbc"><span style="letter-spacing:0.67px">2024-04-02-</span>jekyll-to-11ty</div><svg style="left:70px;top:859px" width="16" height="16" viewBox="0 0 16 16"><path d="M2.6 13.5 L2.6 2.2 Q2.6 1.3 3.5 1.5 L8.1 2.9 L8.1 12.4" fill="none" stroke="#a9afbc" stroke-width="1.3" stroke-linejoin="round"/><path d="M3.2 10.8 L8.1 12.2" fill="none" stroke="#a9afbc" stroke-width="1.1"/><path d="M8.1 2.9 Q8.2 2.2 9.1 2.2 L13.1 2.2 Q13.75 2.2 13.75 2.9 L13.75 12.5" fill="none" stroke="#a9afbc" stroke-width="1.3" stroke-linejoin="round"/><path d="M1.95 11.6 L14.4 11.6 L14.4 13.4 Q14.4 14.8 13 14.8 L3.5 14.8 Q1.95 14.8 1.95 13.2 Z" fill="#a9afbc"/><rect x="7.5" y="11" width="1.3" height="1.5" fill="#a9afbc"/></svg><div class="t sans" style="left:94.5px;top:856.00px;font-size:16px;line-height:22px;color:#a9afbc"><span style="letter-spacing:0.67px">2024-09-22-</span>cohost-web-comics.md</div><svg style="left:70px;top:888px" width="16" height="16" viewBox="0 0 16 16"><path d="M2.6 13.5 L2.6 2.2 Q2.6 1.3 3.5 1.5 L8.1 2.9 L8.1 12.4" fill="none" stroke="#a9afbc" stroke-width="1.3" stroke-linejoin="round"/><path d="M3.2 10.8 L8.1 12.2" fill="none" stroke="#a9afbc" stroke-width="1.1"/><path d="M8.1 2.9 Q8.2 2.2 9.1 2.2 L13.1 2.2 Q13.75 2.2 13.75 2.9 L13.75 12.5" fill="none" stroke="#a9afbc" stroke-width="1.3" stroke-linejoin="round"/><path d="M1.95 11.6 L14.4 11.6 L14.4 13.4 Q14.4 14.8 13 14.8 L3.5 14.8 Q1.95 14.8 1.95 13.2 Z" fill="#a9afbc"/><rect x="7.5" y="11" width="1.3" height="1.5" fill="#a9afbc"/></svg><div class="t sans" style="left:94.5px;top:885.00px;font-size:16px;line-height:22px;color:#dec184"><span style="letter-spacing:0.67px">2024-09-29-</span>goodbye-cohost.md</div><svg style="left:70px;top:917px" width="16" height="16" viewBox="0 0 16 16"><path d="M2.6 13.5 L2.6 2.2 Q2.6 1.3 3.5 1.5 L8.1 2.9 L8.1 12.4" fill="none" stroke="#a9afbc" stroke-width="1.3" stroke-linejoin="round"/><path d="M3.2 10.8 L8.1 12.2" fill="none" stroke="#a9afbc" stroke-width="1.1"/><path d="M8.1 2.9 Q8.2 2.2 9.1 2.2 L13.1 2.2 Q13.75 2.2 13.75 2.9 L13.75 12.5" fill="none" stroke="#a9afbc" stroke-width="1.3" stroke-linejoin="round"/><path d="M1.95 11.6 L14.4 11.6 L14.4 13.4 Q14.4 14.8 13 14.8 L3.5 14.8 Q1.95 14.8 1.95 13.2 Z" fill="#a9afbc"/><rect x="7.5" y="11" width="1.3" height="1.5" fill="#a9afbc"/></svg><div class="t sans" style="left:94.5px;top:914.00px;font-size:16px;line-height:22px;color:#dec184"><span style="letter-spacing:0.67px">2024-10-20-</span>mv-music-in-</div><div class="ab" style="left:0;top:0;width:284px;height:58px;background:#2f343e;box-shadow:0 1px 4px rgba(0,0,0,0.14)"></div><div class="ab" style="left:15px;top:29px;width:1px;height:29px;background:#3d424c"></div><svg style="left:10px;top:7px" width="16" height="16" viewBox="0 0 16 16"><path d="M2.6 13 L0.9 3.3 Q0.8 2.5 1.7 2.5 L6.4 2.5 L7.4 3.8 L11 3.8 Q11.8 3.8 11.9 4.6 L12 5.8" fill="none" stroke="#a9afbc" stroke-width="1.2" stroke-linejoin="round"/><path d="M4.2 6.1 L15.2 6.1 Q15.9 6.1 15.8 6.8 L15 13.3 Q14.9 14.2 14 14.2 L2.9 14.2 Q2.1 14.2 2.3 13.4 L3.5 6.8 Q3.6 6.1 4.2 6.1 Z" fill="#a9afbc"/></svg><div class="t sans" style="left:34.5px;top:4.00px;font-size:16px;line-height:22px;color:#dec184">garden</div><svg style="left:30px;top:36px" width="16" height="16" viewBox="0 0 16 16"><path d="M2.6 13 L0.9 3.3 Q0.8 2.5 1.7 2.5 L6.4 2.5 L7.4 3.8 L11 3.8 Q11.8 3.8 11.9 4.6 L12 5.8" fill="none" stroke="#a9afbc" stroke-width="1.2" stroke-linejoin="round"/><path d="M4.2 6.1 L15.2 6.1 Q15.9 6.1 15.8 6.8 L15 13.3 Q14.9 14.2 14 14.2 L2.9 14.2 Q2.1 14.2 2.3 13.4 L3.5 6.8 Q3.6 6.1 4.2 6.1 Z" fill="#a9afbc"/></svg><div class="t sans" style="left:54.5px;top:33.00px;font-size:16px;line-height:22px;color:#dec184">src</div></div>
</div></div><div class="wb"></div></body></html>
